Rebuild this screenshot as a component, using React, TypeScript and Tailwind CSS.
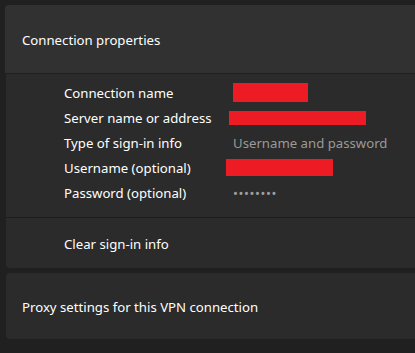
import React from 'react';

const font = { fontFamily: '"Segoe UI", "Noto Sans", "Open Sans", sans-serif' };

interface Row {
  label: string;
  value?: string;
  redact?: string;
}

const rows: Row[] = [
  { label: 'Connection name', redact: 'ml-0 w-[75px] h-[19px]' },
  { label: 'Server name or address', redact: '-ml-[4px] w-[137px] h-[14px]' },
  { label: 'Type of sign-in info', value: 'Username and password' },
  { label: 'Username (optional)', redact: '-ml-[7px] w-[107px] h-[17px]' },
  { label: 'Password (optional)', value: '••••••••' },
];

export default function App() {
  return (
    <div className="w-[415px] h-[353px] overflow-hidden bg-[#202020] pt-[5px] pl-[5px] text-[13.2px] text-white" style={font}>
      {/* Connection properties */}
      <div className="flex h-[68px] items-center rounded-tl-[4px] bg-[#313131] px-[17px] pt-[3px]">
        Connection properties
      </div>
      <div className="ml-[1px] mt-[1px] rounded-bl-[4px] bg-[#2b2b2b]">
        <div className="pt-[6px] pb-[12px]">
          {rows.map((r) => (
            <div key={r.label} className="flex h-[25px] items-center pl-[58px]">
              <span className="w-[169px] shrink-0 pt-[3px]">{r.label}</span>
              {r.redact ? (
                <span className={`bg-[#ed1c24] ${r.redact}`} />
              ) : (
                <span
                  className={
                    r.value === '••••••••'
                      ? 'pt-[3px] text-[13px] tracking-[0.6px] text-[#a0a0a0]'
                      : 'pt-[3px] text-[#9a9a9a]'
                  }
                >
                  {r.value}
                </span>
              )}
            </div>
          ))}
        </div>
        <div className="h-[1px] bg-[#1d1d1d]" />
        <div className="flex h-[50px] items-center pl-[58px] pt-[3px]">Clear sign-in info</div>
      </div>

      {/* Proxy */}
      <div className="ml-[1px] mt-[5px] flex h-[66px] items-center rounded-l-[4px] bg-[#2b2b2b] px-[16px] pt-[3px]">
        Proxy settings for this VPN connection
      </div>
    </div>
  );
}
